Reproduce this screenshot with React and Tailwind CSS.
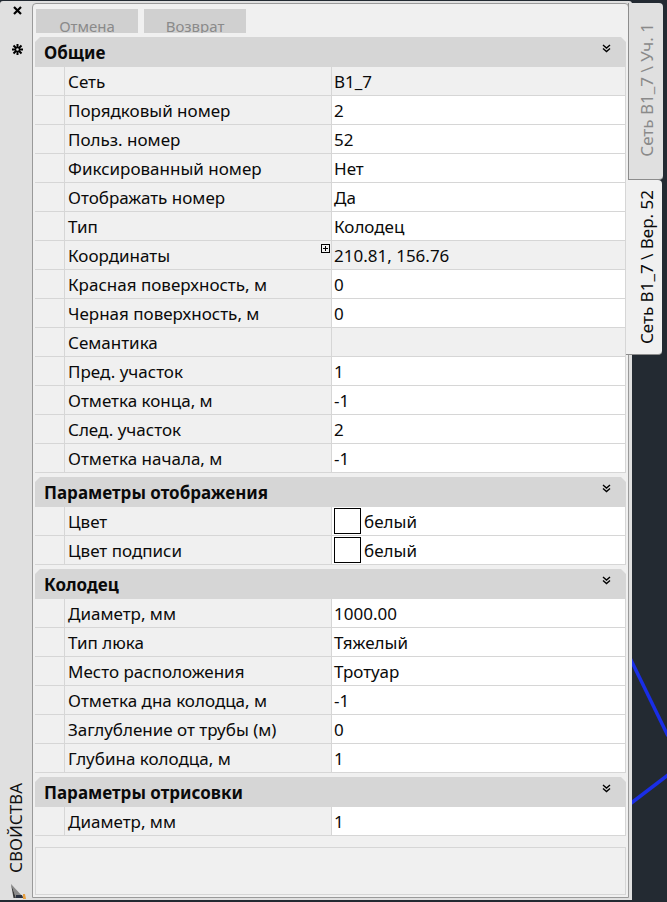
const sections = [
  {
    title: "Общие",
    rows: [
      { label: "Сеть", value: "B1_7", readOnly: true },
      { label: "Порядковый номер", value: "2" },
      { label: "Польз. номер", value: "52" },
      { label: "Фиксированный номер", value: "Нет" },
      { label: "Отображать номер", value: "Да" },
      { label: "Тип", value: "Колодец" },
      { label: "Координаты", value: "210.81, 156.76", readOnly: true, expand: true },
      { label: "Красная поверхность, м", value: "0" },
      { label: "Черная поверхность, м", value: "0" },
      { label: "Семантика", value: "", readOnly: true },
      { label: "Пред. участок", value: "1" },
      { label: "Отметка конца, м", value: "-1" },
      { label: "След. участок", value: "2" },
      { label: "Отметка начала, м", value: "-1" },
    ],
  },
  {
    title: "Параметры отображения",
    rows: [
      { label: "Цвет", value: "белый", swatch: true },
      { label: "Цвет подписи", value: "белый", swatch: true },
    ],
  },
  {
    title: "Колодец",
    rows: [
      { label: "Диаметр, мм", value: "1000.00" },
      { label: "Тип люка", value: "Тяжелый" },
      { label: "Место расположения", value: "Тротуар" },
      { label: "Отметка дна колодца, м", value: "-1" },
      { label: "Заглубление от трубы (м)", value: "0" },
      { label: "Глубина колодца, м", value: "1" },
    ],
  },
  {
    title: "Параметры отрисовки",
    rows: [{ label: "Диаметр, мм", value: "1" }],
  },
];

function Chevrons() {
  return (
    <svg width="9" height="9" viewBox="0 0 9 9" fill="none" stroke="#000" strokeWidth="1.4" className="mb-[10px]">
      <path d="M1 1l3.5 3L8 1" />
      <path d="M1 4.5l3.5 3L8 4.5" />
    </svg>
  );
}

function Row({ row }) {
  return (
    <div className="grid h-[29px] grid-cols-[30px_267px_1fr] grid-rows-[28px] border-b border-[#d6d6d6] text-[17px] leading-[30px] text-[#0a0a0a]">
      <div className="border-r border-[#d6d6d6]" />
      <div className="relative whitespace-nowrap border-r border-[#d6d6d6] pl-[3px]">
        {row.label}
        {/* Expand box for compound values */}
        {row.expand && (
          <svg width="9" height="9" viewBox="0 0 9 9" className="absolute top-[3px] right-[1px]" fill="none" stroke="#000">
            <rect x="0.5" y="0.5" width="8" height="8" />
            <path d="M2 4.5h5M4.5 2v5" />
          </svg>
        )}
      </div>
      <div className={`flex items-start border-r border-[#d6d6d6] pl-[2px] ${row.readOnly ? "bg-[#f0f0f0]" : "bg-white"}`}>
        {row.swatch && <span className="mr-[3px] mt-[1px] h-[26px] w-[27px] border border-black bg-white" />}
        {row.value}
      </div>
    </div>
  );
}

function Section({ section }) {
  return (
    <div className="mt-[4px]">
      <div className="flex h-[30px] items-center justify-between bg-[#d6d6d6] pl-[9px] pr-[15px] pt-[2px] text-[17px] font-bold text-[#0a0a0a] [clip-path:polygon(5px_0,calc(100%-5px)_0,100%_5px,100%_100%,0_100%,0_5px)]">
        {section.title}
        <Chevrons />
      </div>
      {section.rows.map((row) => (
        <Row key={row.label} row={row} />
      ))}
    </div>
  );
}

function PanelButton({ children }) {
  return (
    <div className="h-[24px] w-[102px] overflow-hidden bg-[#d0d0d0] pt-[5px] text-center text-[15px] leading-[24px] text-[#8a8a8a]">
      {children}
    </div>
  );
}

export default function App() {
  return (
    <div
      className="relative flex h-[902px] w-[667px] items-start overflow-hidden bg-[#232a32]"
      style={{ fontFamily: '"Noto Sans", sans-serif' }}
    >
      {/* Polyline of the drawing behind the palette */}
      <svg className="absolute left-0 top-0" width="667" height="902" fill="none" stroke="#1a2ee6" strokeWidth="3.5">
        <path d="M630 658L668 736" />
        <path d="M630 804L668 775" />
      </svg>

      {/* Palette frame */}
      <div className="relative mt-[1px] flex h-[899px] w-[632px] shrink-0 rounded-t-[3px] bg-[#e0e0e0]">
        {/* Left title strip */}
        <div className="flex w-[32px] shrink-0 flex-col items-center justify-between pb-[1px] pl-[1px] pt-[5px]">
          <div className="ml-[2px] flex flex-col items-center gap-[29px]">
            <svg width="9" height="9" viewBox="0 0 9 9" stroke="#000" strokeWidth="2.2">
              <path d="M1 1l7 7M8 1L1 8" />
            </svg>
            <svg width="11" height="11" viewBox="0 0 11 11" fill="none" stroke="#000" strokeWidth="2">
              <path d="M5.5 0v3.5M5.5 7.5V11M0 5.5h3.5M7.5 5.5H11" />
              <path d="M1.5 1.5l2.5 2.5M7 7l2.5 2.5M9.5 1.5L7 4M4 7L1.5 9.5" />
              <circle cx="5.5" cy="5.5" r="2" strokeWidth="1.4" />
            </svg>
          </div>
          <div className="flex flex-col items-center gap-[11px]">
            <span className="mr-[2px] rotate-180 text-[17px] leading-[20px] text-[#111] [writing-mode:vertical-rl]">СВОЙСТВА</span>
            <svg width="15" height="15" viewBox="0 0 15 15" className="ml-[4px]">
              <path d="M0 0L13 14H5z" fill="#8a8a8a" />
              <path d="M0 0L5 14H2.5z" fill="#3a3a3a" />
              <path d="M5 11h6l1 3H5z" fill="#2a3140" />
              <path d="M12 10l2 0 1 5h-3z" fill="#e8a040" />
            </svg>
          </div>
        </div>

        {/* Main palette */}
        <div className="mt-[2px] flex h-[895px] w-[597px] shrink-0 flex-col rounded-t-[4px] border border-[#9a9a9a] bg-[#f0f0f0] px-[2px] pt-[5px]">
          <div className="flex gap-[6px] pl-[1px]">
            <PanelButton>Отмена</PanelButton>
            <PanelButton>Возврат</PanelButton>
          </div>
          {sections.map((section) => (
            <Section key={section.title} section={section} />
          ))}
          <div className="mt-[11px] h-[48px] border border-[#d6d6d6]" />
        </div>
      </div>

      {/* Right tabs */}
      <div className="relative -ml-[4px] flex w-[35px] flex-col pt-[3px]">
        <div className="flex h-[177px] w-[35px] items-center justify-end rounded-r-[4px] border-b border-l border-[#8c8c8c] bg-[#e0e0e0] pb-[22px] pl-[2px] [writing-mode:vertical-rl]">
          <span className="rotate-180 whitespace-nowrap text-[17px] leading-[24px] text-[#8a8a8a]">Сеть B1_7 \ Уч. 1</span>
        </div>
        <div className="-ml-[2px] flex h-[175px] w-[36px] items-center justify-center rounded-r-[4px] border-b border-[#8c8c8c] bg-[#f0f0f0] pl-[6px] [writing-mode:vertical-rl]">
          <span className="rotate-180 whitespace-nowrap text-[17px] leading-[24px] text-[#0a0a0a]">Сеть B1_7 \ Вер. 52</span>
        </div>
      </div>
    </div>
  );
}
